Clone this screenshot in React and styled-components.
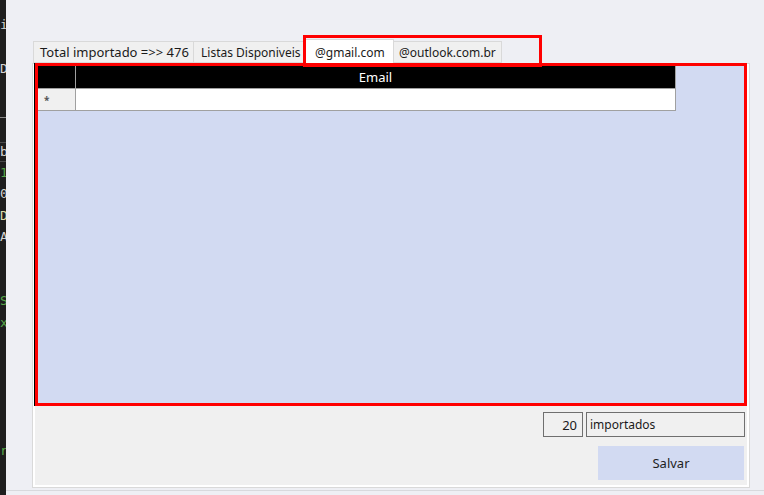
import React from "react";
import styled, { createGlobalStyle } from "styled-components";

const GlobalStyle = createGlobalStyle`
  html, body {
    margin: 0;
    padding: 0;
  }
  body {
    background: #eeeff4;
    font-family: "Noto Sans", "Open Sans", sans-serif;
  }
`;

const Screen = styled.div`
  display: flex;
  width: 764px;
  height: 495px;
  overflow: hidden;
  background: #eeeff4;
`;

// the strip of code editor left of the window
const EditorStrip = styled.div`
  width: 6px;
  flex-shrink: 0;
  background: #1e1e1e;
  overflow: hidden;
  display: flex;
  flex-direction: column;
  font-family: "DejaVu Sans Mono", monospace;
  font-size: 13px;
`;

const CodeLine = styled.div`
  height: ${(p) => p.h}px;
  line-height: ${(p) => p.h}px;
  color: ${(p) => p.color || "#d4d4d4"};
  white-space: pre;
  flex-shrink: 0;
`;

const Separator = styled.div`
  height: 1px;
  background: #8a8a8a;
  flex-shrink: 0;
`;

const CurrentLine = styled.div`
  height: 18px;
  line-height: 18px;
  border-top: 1px solid #4a4a4a;
  border-bottom: 1px solid #4a4a4a;
  color: #d4d4d4;
  flex-shrink: 0;
`;

const FormArea = styled.div`
  flex: 1;
  height: 491px;
  border-bottom: 1px solid #d8d9dd;
  padding: 39px 0 0 26px;
  box-sizing: border-box;
`;

const TabControl = styled.div`
  position: relative;
  width: 718px;
`;

const TabStrip = styled.div`
  display: flex;
  align-items: flex-end;
  height: 24px;
  padding-left: 1px;
`;

const Tab = styled.div`
  box-sizing: border-box;
  width: ${(p) => p.w}px;
  height: ${(p) => (p.active ? 25 : 22)}px;
  margin-bottom: ${(p) => (p.active ? -1 : 0)}px;
  padding-left: ${(p) => p.pl}px;
  display: flex;
  align-items: center;
  background: ${(p) => (p.active ? "#ffffff" : "#f0f0f0")};
  border: 1px solid #d9d9d9;
  border-bottom: ${(p) => (p.active ? "none" : "1px solid #d9d9d9")};
  border-left: ${(p) => (p.first || p.active ? "1px solid #d9d9d9" : "none")};
  position: relative;
  z-index: ${(p) => (p.active ? 2 : 1)};
  font-size: ${(p) => p.fs || 12}px;
  color: #1a1a1a;
  white-space: nowrap;
`;

const Highlight = styled.div`
  position: absolute;
  left: 271px;
  top: -4px;
  width: 239px;
  height: 32px;
  box-sizing: border-box;
  border: 3px solid #ff0000;
  z-index: 5;
  pointer-events: none;
`;

const TabPage = styled.div`
  box-sizing: border-box;
  height: 425px;
  border: 1px solid #d9d9d9;
  background: #ffffff;
  padding: 0 2px 2px;
`;

const PageBody = styled.div`
  height: 100%;
  background: #f0f0f0;
  display: flex;
  flex-direction: column;
`;

const GridFrame = styled.div`
  box-sizing: border-box;
  height: 343px;
  margin-top: -1px;
  border: 3px solid #ff0000;
  box-shadow: -1px 0 0 #000000;
  background: #d2daf2;
  position: relative;
  z-index: 3;
`;

const GridTable = styled.div`
  width: 638px;
  display: flex;
  flex-direction: column;
  font-size: 13px;
`;

const HeaderRow = styled.div`
  display: flex;
  height: 22px;
  background: #000000;
  border-right: 1px solid #a0a0a0;
`;

const DataRow = styled.div`
  display: flex;
  height: 21px;
  background: #ffffff;
  border-top: 1px solid #a0a0a0;
  border-bottom: 1px solid #a0a0a0;
  border-right: 1px solid #a0a0a0;
`;

const RowHeader = styled.div`
  box-sizing: border-box;
  width: 38px;
  flex-shrink: 0;
  border-right: 1px solid #a0a0a0;
  background: ${(p) => (p.header ? "#000000" : "#f0f0f0")};
  display: flex;
  align-items: center;
  padding-left: 6px;
  font-size: 10px;
  font-weight: bold;
  color: #555555;
`;

const HeaderCell = styled.div`
  flex: 1;
  display: flex;
  align-items: center;
  justify-content: center;
  color: #ffffff;
`;

const Cell = styled.div`
  flex: 1;
`;

const ControlsRow = styled.div`
  display: flex;
  justify-content: flex-end;
  gap: 3px;
  margin-top: 6px;
  padding-right: 2px;
`;

const Field = styled.div`
  box-sizing: border-box;
  width: ${(p) => p.w}px;
  height: 25px;
  border: 1px solid #6f6f6f;
  background: #f0f0f0;
  display: flex;
  align-items: center;
  justify-content: ${(p) => (p.right ? "flex-end" : "flex-start")};
  padding: ${(p) => (p.right ? "0 5px 0 0" : "0 0 0 3px")};
  font-size: ${(p) => p.fs || 13}px;
  color: #1a1a1a;
`;

const ButtonRow = styled.div`
  display: flex;
  justify-content: flex-end;
  margin-top: 9px;
  padding-right: 3px;
`;

const SaveButton = styled.button`
  width: 146px;
  height: 34px;
  border: none;
  background: #d2daf2;
  font-family: "Noto Sans", "Open Sans", sans-serif;
  font-size: 13px;
  color: #1e1e1e;
  padding: 0;
`;

const codeTop = [
  { h: 14, t: "" },
  { h: 22, t: "i" },
  { h: 22, t: "" },
  { h: 22, t: "D" },
  { h: 37, t: "" },
];

const codeBottom = [
  { t: "1", c: "#57a64a" },
  { t: "0" },
  { t: "D", c: "#dcdcaa" },
  { t: "A" },
  { t: "" },
  { t: "" },
  { t: "S", c: "#57a64a" },
  { t: "x", c: "#57a64a" },
  { t: "" },
  { t: "" },
  { t: "" },
  { t: "" },
  { t: "" },
  { t: "r", c: "#57a64a" },
];

export default function App() {
  return (
    <>
      <GlobalStyle />
      <Screen>
        <EditorStrip>
          {codeTop.map((l, i) => (
            <CodeLine key={i} h={l.h}>
              {l.t}
            </CodeLine>
          ))}
          <Separator />
          <CodeLine h={24} />
          <CurrentLine>b</CurrentLine>
          {codeBottom.map((l, i) => (
            <CodeLine key={i} h={21.4} color={l.c}>
              {l.t}
            </CodeLine>
          ))}
        </EditorStrip>

        <FormArea>
          <TabControl>
            <TabStrip>
              <Tab w={161} pl={6} fs={13} first>
                Total importado =&gt;&gt; 476
              </Tab>
              <Tab w={111} pl={7}>
                Listas Disponiveis
              </Tab>
              <Tab w={89} pl={9} active>
                @gmail.com
              </Tab>
              <Tab w={108} pl={5}>
                @outlook.com.br
              </Tab>
            </TabStrip>
            <Highlight />
            <TabPage>
              <PageBody>
                <GridFrame>
                  <GridTable>
                    <HeaderRow>
                      <RowHeader header />
                      <HeaderCell>Email</HeaderCell>
                    </HeaderRow>
                    <DataRow>
                      <RowHeader>*</RowHeader>
                      <Cell />
                    </DataRow>
                  </GridTable>
                </GridFrame>
                <ControlsRow>
                  <Field w={40} right>
                    20
                  </Field>
                  <Field w={159} fs={12}>
                    importados
                  </Field>
                </ControlsRow>
                <ButtonRow>
                  <SaveButton>Salvar</SaveButton>
                </ButtonRow>
              </PageBody>
            </TabPage>
          </TabControl>
        </FormArea>
      </Screen>
    </>
  );
}
